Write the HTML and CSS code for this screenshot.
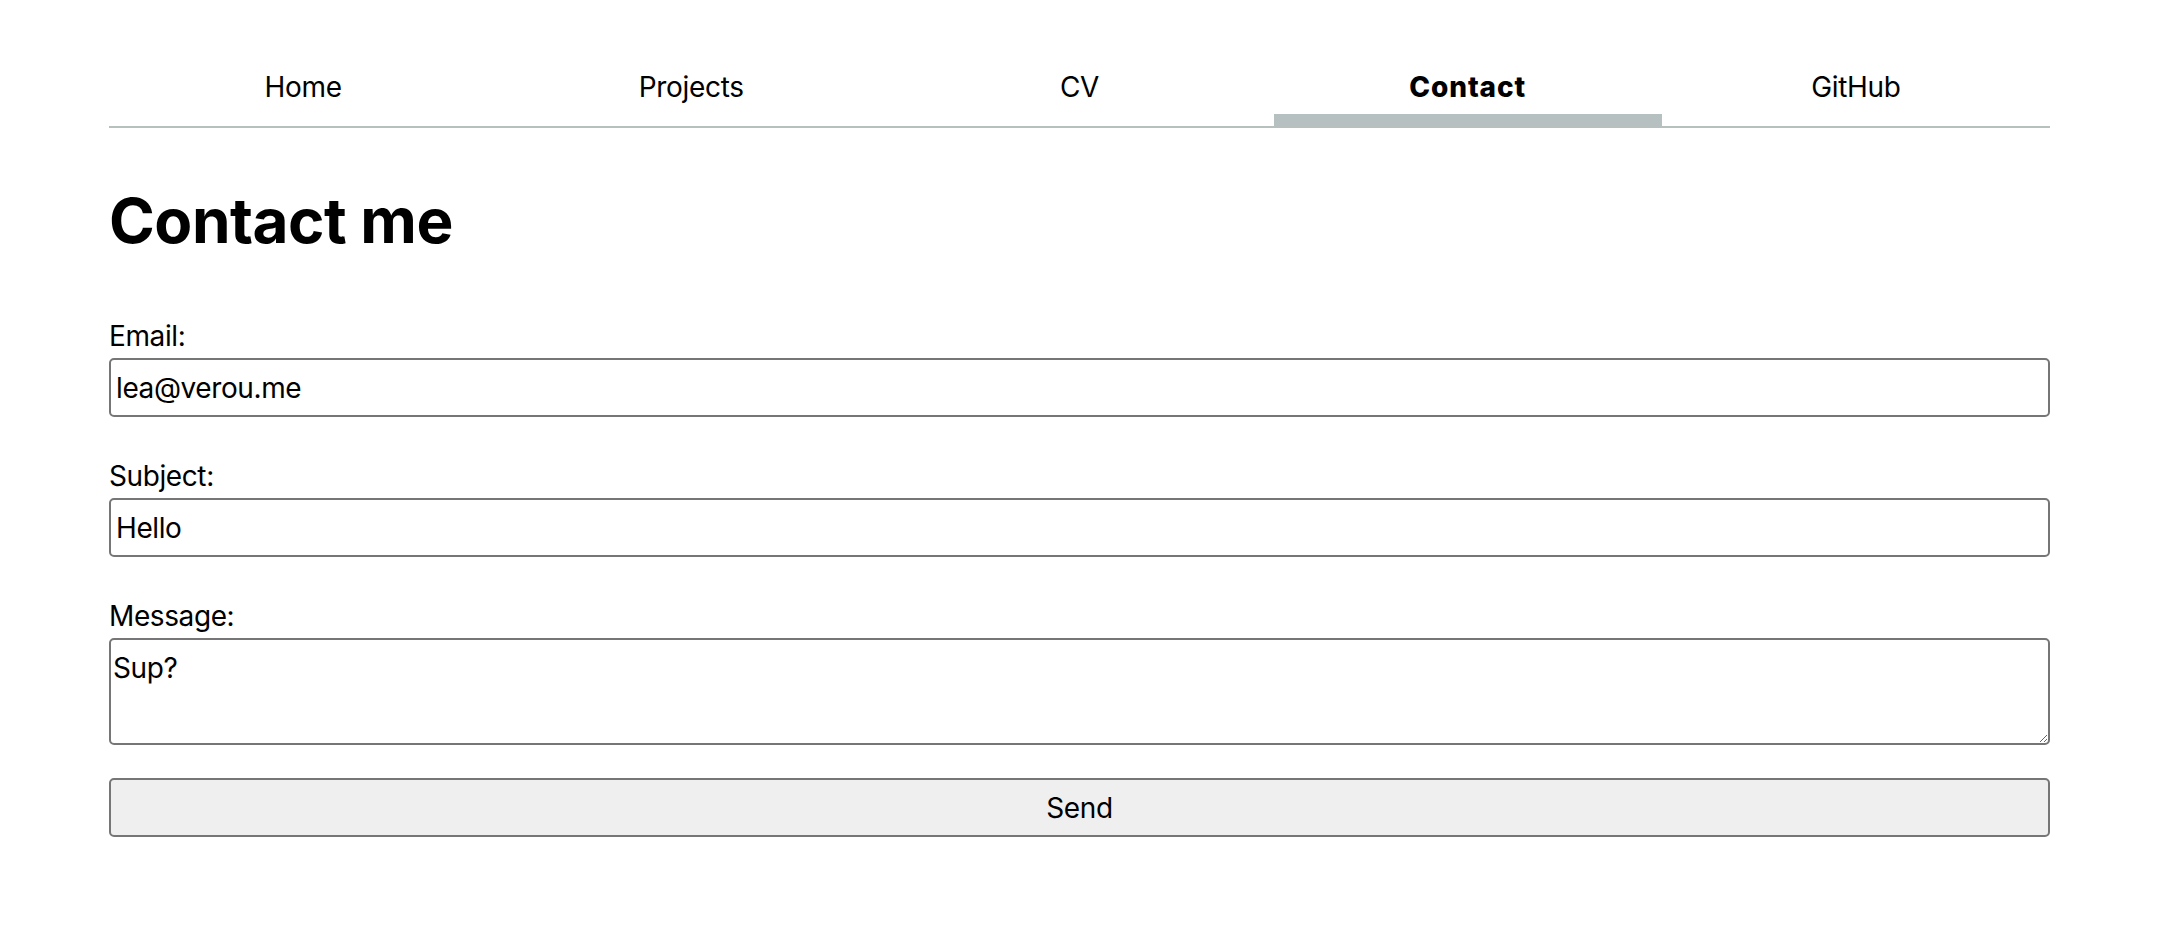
FILE: index.html
```html
<!DOCTYPE html>
<html lang="en">
<head>
<meta charset="utf-8">
<title>Contact me</title>
<link rel="stylesheet" href="styles.css">
</head>
<body>
<div class="page">
  <nav class="tabs">
    <a class="tab" href="#">Home</a>
    <a class="tab" href="#">Projects</a>
    <a class="tab" href="#">CV</a>
    <a class="tab active" href="#">Contact</a>
    <a class="tab" href="#">GitHub</a>
  </nav>
  <h1 class="title">Contact me</h1>
  <form class="form">
    <label class="field">
      <span class="label">Email:</span>
      <input class="input" type="email" value="lea@verou.me">
    </label>
    <label class="field">
      <span class="label">Subject:</span>
      <input class="input" type="text" value="Hello">
    </label>
    <label class="field">
      <span class="label">Message:</span>
      <textarea class="textarea">Sup?</textarea>
    </label>
    <button class="send" type="button">Send</button>
  </form>
</div>
</body>
</html>
```
FILE: styles.css
```css
html, body {
  margin: 0;
  padding: 0;
  background: #fff;
}
body {
  font-family: Inter, "Liberation Sans", sans-serif;
  font-size: 28px;
  color: #000;
  letter-spacing: -0.4px;
}
.page {
  width: 1941px;
  margin-left: 109px;
  padding-top: 70px;
}
.tabs {
  display: flex;
  border-bottom: 2px solid #b7bfbf;
}
.tab {
  flex: 1;
  text-align: center;
  color: #000;
  text-decoration: none;
  line-height: 34px;
  padding-bottom: 10px;
  border-bottom: 12px solid transparent;
  letter-spacing: -0.3px;
}
.tab.active {
  font-weight: 800;
  letter-spacing: 0.9px;
  border-bottom-color: #b7c0c0;
}
.title {
  margin: 53px 0 0;
  font-size: 62px;
  font-weight: 700;
  line-height: 80px;
  letter-spacing: -0.5px;
}
.form {
  display: flex;
  flex-direction: column;
  margin-top: 58px;
}
.field {
  display: flex;
  flex-direction: column;
  gap: 5px;
  margin-bottom: 42px;
}
.label {
  line-height: 34px;
}
.input, .textarea, .send {
  font: inherit;
  letter-spacing: -0.4px;
  color: #000;
  box-sizing: border-box;
  border: 2px solid #767676;
  border-radius: 5px;
  margin: 0;
  width: 100%;
}
.input {
  height: 59px;
  padding: 0 5px;
  background: #fff;
}
.textarea {
  height: 107px;
  padding: 11px 2px 9px;
  line-height: 34px;
  background: #fff;
  resize: both;
}
.field:nth-child(3) {
  margin-bottom: 33px;
}
.send {
  height: 59px;
  background: #efefef;
  text-align: center;
  padding: 0;
}
```
